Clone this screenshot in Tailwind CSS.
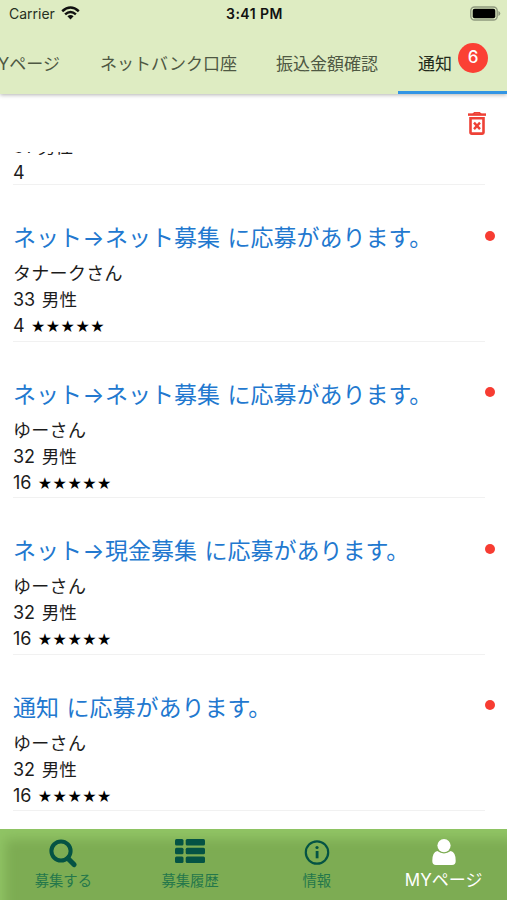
<!DOCTYPE html>
<html lang="ja">
<head>
<meta charset="utf-8">
<title>通知</title>
<script src="https://cdn.jsdelivr.net/npm/@tailwindcss/browser@4"></script>
</head>
<body class="bg-white">
<div class="w-[507px] h-[900px] overflow-hidden flex flex-col bg-white font-[Inter,'Noto_Sans_CJK_JP',sans-serif] text-[#1c1c1c]">
  <header class="relative z-10 h-[94px] shrink-0 bg-[#deecc2] shadow-[0_1px_4px_rgba(0,0,0,0.3)] flex flex-col">
    <div class="h-7 shrink-0 grid grid-cols-3 items-center pl-[9px] pr-[6px] text-sm leading-7">
      <div class="flex items-center gap-[6px] text-[#26301f]"><span>Carrier</span>
        <svg class="w-[19px] h-[14px] -mt-[2px]" viewBox="0 0 19 14"><g fill="none" stroke="#111" stroke-width="2.5"><path d="M1.2 5.2Q9.5-2.2 17.8 5.2"/><path d="M4.1 8.4Q9.5 3.6 14.9 8.4"/></g><path d="M9.5 13.6L6.4 10.3Q9.5 7.8 12.6 10.3Z" fill="#111"/></svg>
      </div>
      <div class="text-center font-semibold text-[#111] text-[14px] tracking-[.45px] whitespace-nowrap -ml-[1px]">3:41 PM</div>
      <div class="flex justify-end -mt-[2px]"><svg class="w-[31px] h-[15px]" viewBox="0 0 31 15"><rect x=".8" y="1" width="26.4" height="13" rx="3.8" fill="none" stroke="#8f997e" stroke-width="1.4"/><rect x="2.7" y="2.8" width="22.6" height="9.4" rx="2" fill="#000"/><path d="M28.4 5v5q1.9-.8 1.9-2.5T28.4 5Z" fill="#8f997e"/></svg></div>
    </div>
    <nav class="flex-1 flex text-[17px] text-[#4e5843] whitespace-nowrap">
      <div class="w-[81px] flex items-center justify-end pr-[21px] pt-[7px]">MYページ</div>
      <div class="w-[175px] flex items-center justify-center pt-[7px]">ネットバンク口座</div>
      <div class="w-[142px] flex items-center justify-center pt-[7px]">振込金額確認</div>
      <div class="w-[109px] flex items-center pl-[20px] gap-[6px] border-b-[3px] border-[#3295e4] text-[#222a1b]"><span class="pt-[10px]">通知</span><span class="size-[30px] rounded-full bg-[#fb4034] text-white text-[17px] font-medium flex items-center justify-center mb-[4px]">6</span></div>
    </nav>
  </header>
  <div class="h-[58px] shrink-0 flex items-center justify-end pr-[21px]">
    <svg class="w-[18px] h-[23px]" viewBox="0 0 18 23" fill="none" stroke="#ee4136"><path d="M0 2.6H18" stroke-width="2.5"/><path d="M5 2.3L6.5.9h5L13 2.3" stroke-width="1.8"/><path d="M2.5 6.3h13v14.2q0 1.1-1.2 1.1H3.7q-1.2 0-1.2-1.1Z" stroke-width="2.6"/><path d="M6 10.6l6 6.5M12 10.6l-6 6.5" stroke-width="2.4"/></svg>
  </div>
  <main class="flex-1 overflow-hidden flex flex-col justify-end pb-[18px] text-[18px] leading-[26px]">
    <section class="shrink-0 ml-[13px] mr-[22px] h-[52px] border-b border-[#f1f1f1]">
      <p class="pt-[1px]">31 <span class="text-[17.6px] ml-[1.5px]">男性</span></p><p>4</p>
    </section>
    <section class="relative shrink-0 ml-[13px] mr-[22px] h-[156.4px] border-b border-[#f1f1f1] pt-[37px]">
      <h2 class="text-[23px] leading-[32px] text-[#2278cf] mb-[7px] whitespace-nowrap">ネット<span class="inline-block w-[23px] text-center">→</span>ネット募集<span class="inline-block w-[7.5px]"></span>に応募があります。</h2>
      <p class="tracking-[.3px]">タナークさん</p><p>33 <span class="text-[17.6px] ml-[1.5px]">男性</span></p><p>4 <span class="text-[14.2px] text-black ml-[1px]">★★★★★</span></p>
      <i class="absolute right-[-10px] top-[45.5px] size-[10px] rounded-full bg-[#f73c32]"></i>
    </section>
    <section class="relative shrink-0 ml-[13px] mr-[22px] h-[156.4px] border-b border-[#f1f1f1] pt-[37px]">
      <h2 class="text-[23px] leading-[32px] text-[#2278cf] mb-[7px] whitespace-nowrap">ネット<span class="inline-block w-[23px] text-center">→</span>ネット募集<span class="inline-block w-[7.5px]"></span>に応募があります。</h2>
      <p class="tracking-[.3px]">ゆーさん</p><p>32 <span class="text-[17.6px] ml-[1.5px]">男性</span></p><p>16 <span class="text-[14.2px] text-black ml-[1px]">★★★★★</span></p>
      <i class="absolute right-[-10px] top-[45.5px] size-[10px] rounded-full bg-[#f73c32]"></i>
    </section>
    <section class="relative shrink-0 ml-[13px] mr-[22px] h-[156.4px] border-b border-[#f1f1f1] pt-[37px]">
      <h2 class="text-[23px] leading-[32px] text-[#2278cf] mb-[7px] whitespace-nowrap">ネット<span class="inline-block w-[23px] text-center">→</span>現金募集<span class="inline-block w-[7.5px]"></span>に応募があります。</h2>
      <p class="tracking-[.3px]">ゆーさん</p><p>32 <span class="text-[17.6px] ml-[1.5px]">男性</span></p><p>16 <span class="text-[14.2px] text-black ml-[1px]">★★★★★</span></p>
      <i class="absolute right-[-10px] top-[45.5px] size-[10px] rounded-full bg-[#f73c32]"></i>
    </section>
    <section class="relative shrink-0 ml-[13px] mr-[22px] h-[156.4px] border-b border-[#f1f1f1] pt-[37px]">
      <h2 class="text-[23px] leading-[32px] text-[#2278cf] mb-[7px] whitespace-nowrap">通知<span class="inline-block w-[7.5px]"></span>に応募があります。</h2>
      <p class="tracking-[.3px]">ゆーさん</p><p>32 <span class="text-[17.6px] ml-[1.5px]">男性</span></p><p>16 <span class="text-[14.2px] text-black ml-[1px]">★★★★★</span></p>
      <i class="absolute right-[-10px] top-[45.5px] size-[10px] rounded-full bg-[#f73c32]"></i>
    </section>
  </main>
  <footer class="h-[71px] shrink-0 grid grid-cols-4 bg-[#7dac53] shadow-[inset_7px_12px_12px_-2px_#90c465] text-[14.3px] leading-5 text-[#24774b]">
    <div class="flex flex-col items-center pt-[10px]">
      <svg class="w-7 h-8" viewBox="0 0 28 32" fill="none" stroke="#045344"><circle cx="12" cy="12" r="9.6" stroke-width="4"/><path d="M19 19.4l6 6.2" stroke-width="5" stroke-linecap="round"/></svg>
      <span>募集する</span>
    </div>
    <div class="flex flex-col items-center pt-[10px]">
      <svg class="w-[30px] h-8" viewBox="0 0 30 32" fill="#045344"><rect y="0" width="8.5" height="6.5" rx="1.5"/><rect x="10.7" y="0" width="19.3" height="6.5" rx="1.5"/><rect y="8.7" width="8.5" height="6.5" rx="1.5"/><rect x="10.7" y="8.7" width="19.3" height="6.5" rx="1.5"/><rect y="17.4" width="8.5" height="6.5" rx="1.5"/><rect x="10.7" y="17.4" width="19.3" height="6.5" rx="1.5"/></svg>
      <span>募集履歴</span>
    </div>
    <div class="flex flex-col items-center pt-[10px]">
      <svg class="w-[26px] h-8" viewBox="0 0 26 32" fill="#045344"><circle cx="13" cy="13.5" r="11.2" fill="none" stroke="#045344" stroke-width="2.2"/><circle cx="13" cy="8.5" r="1.6"/><path d="M11.7 12h2.8v7.3h-2.8Z"/></svg>
      <span>情報</span>
    </div>
    <div class="flex flex-col items-center pt-[10px] text-white text-[17px]">
      <svg class="w-6 h-[31px]" viewBox="0 0 24 31" fill="#fff"><circle cx="12" cy="6.6" r="6.6"/><path d="M5.3 12.1Q12 16.8 18.7 12.1Q23.7 13 23.7 22Q23.7 26 20 26H4Q.3 26 .3 22Q.3 13 5.3 12.1Z"/></svg>
      <span>MYページ</span>
    </div>
  </footer>
</div>
</body>
</html>
